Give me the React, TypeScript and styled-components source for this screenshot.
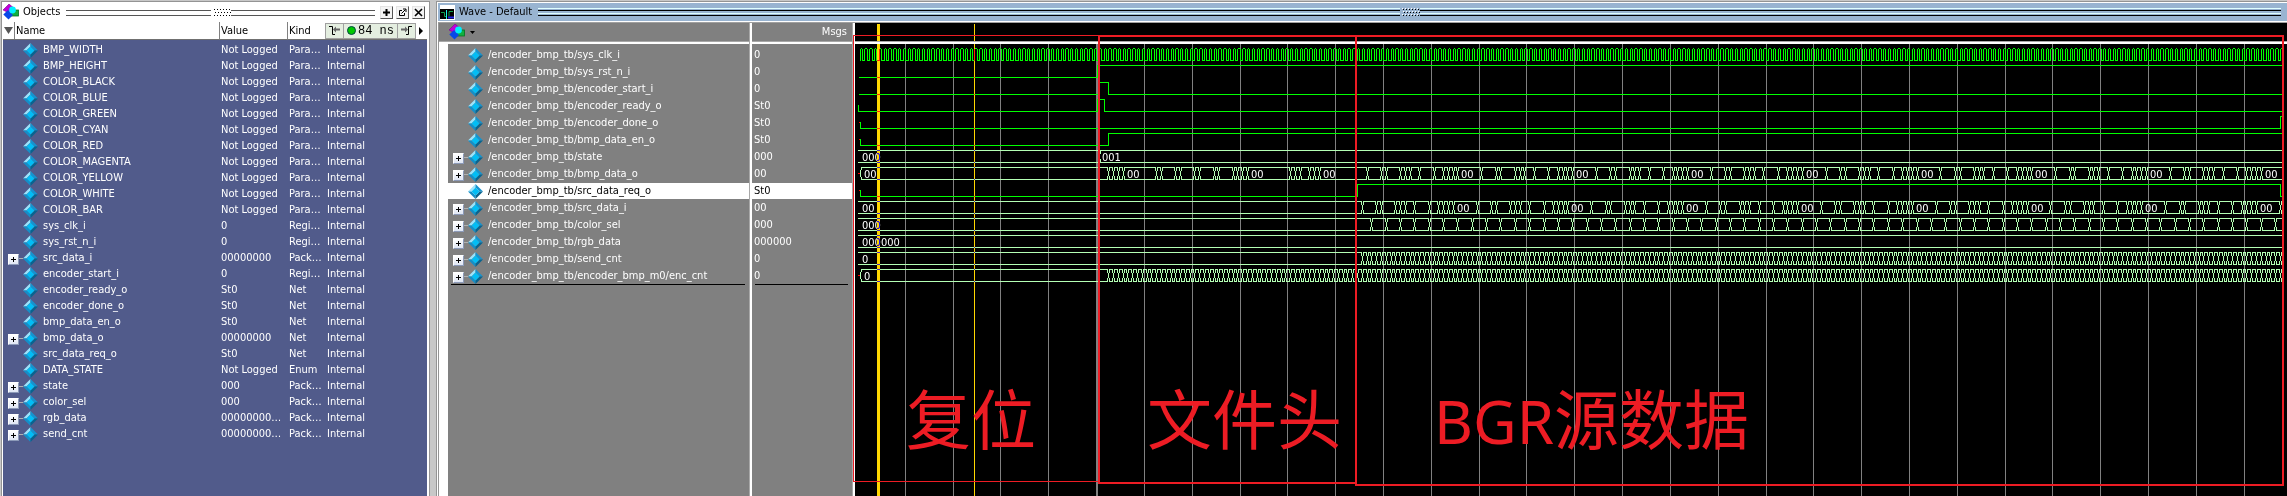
import React from "react";
import styled, { createGlobalStyle } from "styled-components";

const GlobalStyle = createGlobalStyle`
  * { box-sizing: border-box; }
  body {
    margin: 0;
    background: #c8c8c8;
    font-family: "DejaVu Sans Condensed", "Noto Sans", sans-serif;
    font-size: 11px;
    line-height: 16px;
    color: #000;
  }
  button { margin: 0; padding: 0; font: inherit; color: inherit; }
`;

/* ---------- data ---------- */

type ObjectRow = [name: string, value: string, kind: string, expandable?: boolean];

const objects: ObjectRow[] = [
  ["BMP_WIDTH", "Not Logged", "Para…"],
  ["BMP_HEIGHT", "Not Logged", "Para…"],
  ["COLOR_BLACK", "Not Logged", "Para…"],
  ["COLOR_BLUE", "Not Logged", "Para…"],
  ["COLOR_GREEN", "Not Logged", "Para…"],
  ["COLOR_CYAN", "Not Logged", "Para…"],
  ["COLOR_RED", "Not Logged", "Para…"],
  ["COLOR_MAGENTA", "Not Logged", "Para…"],
  ["COLOR_YELLOW", "Not Logged", "Para…"],
  ["COLOR_WHITE", "Not Logged", "Para…"],
  ["COLOR_BAR", "Not Logged", "Para…"],
  ["sys_clk_i", "0", "Regi…"],
  ["sys_rst_n_i", "0", "Regi…"],
  ["src_data_i", "00000000", "Pack…", true],
  ["encoder_start_i", "0", "Regi…"],
  ["encoder_ready_o", "St0", "Net"],
  ["encoder_done_o", "St0", "Net"],
  ["bmp_data_en_o", "St0", "Net"],
  ["bmp_data_o", "00000000", "Net", true],
  ["src_data_req_o", "St0", "Net"],
  ["DATA_STATE", "Not Logged", "Enum"],
  ["state", "000", "Pack…", true],
  ["color_sel", "000", "Pack…", true],
  ["rgb_data", "00000000…", "Pack…", true],
  ["send_cnt", "00000000…", "Pack…", true],
];

interface Signal {
  name: string;
  value: string;
  expandable?: boolean;
  selected?: boolean;
}

const signals: Signal[] = [
  { name: "/encoder_bmp_tb/sys_clk_i", value: "0" },
  { name: "/encoder_bmp_tb/sys_rst_n_i", value: "0" },
  { name: "/encoder_bmp_tb/encoder_start_i", value: "0" },
  { name: "/encoder_bmp_tb/encoder_ready_o", value: "St0" },
  { name: "/encoder_bmp_tb/encoder_done_o", value: "St0" },
  { name: "/encoder_bmp_tb/bmp_data_en_o", value: "St0" },
  { name: "/encoder_bmp_tb/state", value: "000", expandable: true },
  { name: "/encoder_bmp_tb/bmp_data_o", value: "00", expandable: true },
  { name: "/encoder_bmp_tb/src_data_req_o", value: "St0", selected: true },
  { name: "/encoder_bmp_tb/src_data_i", value: "00", expandable: true },
  { name: "/encoder_bmp_tb/color_sel", value: "000", expandable: true },
  { name: "/encoder_bmp_tb/rgb_data", value: "000000", expandable: true },
  { name: "/encoder_bmp_tb/send_cnt", value: "0", expandable: true },
  { name: "/encoder_bmp_tb/encoder_bmp_m0/enc_cnt", value: "0", expandable: true },
];

/* ---------- small drawings ---------- */

const Glyph = styled.svg`
  display: block;
  flex: none;
`;

const Diamond = () => (
  <Glyph width="15" height="15" viewBox="0 0 15 15" aria-hidden="true">
    <path d="M7.5 0 L0 7.5 L3.5 7.5 L7.5 3.5 Z" fill="#9be3fb" />
    <path d="M7.5 0 L15 7.5 L11.5 7.5 L7.5 3.5 Z" fill="#1593cf" />
    <path d="M0 7.5 L7.5 15 L7.5 11.5 L3.5 7.5 Z" fill="#148fc8" />
    <path d="M15 7.5 L7.5 15 L7.5 11.5 L11.5 7.5 Z" fill="#08648f" />
    <path d="M7.5 3.5 L11.5 7.5 L7.5 11.5 L3.5 7.5 Z" fill="#02bdf5" />
  </Glyph>
);

const ShapesIcon = () => (
  <Glyph width="16" height="16" viewBox="0 0 16 16" aria-hidden="true">
    <path d="M6 0 L12 5 L6 9 L0 6 Z" fill="#c000d8" stroke="#7a0090" strokeWidth="0.6" />
    <rect x="8" y="6" width="7.5" height="6" fill="#10b040" stroke="#067020" strokeWidth="0.8" />
    <path d="M5 6 L10 11 L5.5 15.6 L0.3 10.5 Z" fill="#0848e8" />
    <circle cx="9.5" cy="6" r="3.4" fill="#00f0ff" />
  </Glyph>
);

const WaveIcon = () => (
  <Glyph width="15" height="15" viewBox="0 0 15 15" aria-hidden="true">
    <rect width="15" height="15" fill="#fff" />
    <rect y="4" width="14" height="10" fill="#000" />
    <path d="M1 7.5 H4.5 V11.5 H6 M9 11.5 V6.5 H13" fill="none" stroke="#10a050" />
    <path d="M6.5 5 V14" stroke="#20f0f0" />
    <path d="M8 12.5 H14" stroke="#2020e0" strokeWidth="2" />
  </Glyph>
);

const GripDots = ({ light }: { light: string }) => {
  const dots = [];
  for (let r = 0; r < 3; r++)
    for (let c = 0; c < 6; c++) dots.push([c * 3 + (r % 2), r * 3]);
  return (
    <Glyph width="18" height="9" shapeRendering="crispEdges" aria-hidden="true">
      {dots.map(([x, y]) => (
        <g key={`${x}-${y}`}>
          <rect x={x} y={y} width="1" height="1" fill={light} />
          <rect x={x + 1} y={y + 1} width="1" height="1" fill="#000" />
        </g>
      ))}
    </Glyph>
  );
};

/* ---------- window frame ---------- */

const Workspace = styled.main`
  display: flex;
  gap: 6px;
  min-height: 100vh;
  padding: 1px 0 0 1px;
`;

const Panel = styled.section<{ $width?: number }>`
  display: flex;
  flex-direction: column;
  flex: ${(p) => (p.$width ? `0 0 ${p.$width}px` : "1 1 0")};
  min-width: 0;
  border: solid #949494;
  border-width: 1px ${(p) => (p.$width ? 1 : 0)}px 0 1px;
  background: #fff;
`;

const TitleBar = styled.header<{ $active?: boolean }>`
  display: flex;
  align-items: center;
  height: ${(p) => (p.$active ? 18 : 20)}px;
  padding: 0 4px 0 ${(p) => (p.$active ? 2 : 1)}px;
  margin: ${(p) => (p.$active ? "1px 0 1px 1px" : "0")};
  background: ${(p) => (p.$active ? "#99b4d1" : "#fff")};
`;

const Title = styled.h2`
  margin: 0 6px 0 4px;
  font-size: 11px;
  font-weight: 400;
  white-space: nowrap;
`;

const GripLines = styled.span<{ $light: string; $dark: string }>`
  flex: 1;
  height: 8px;
  margin: 0 2px 0 0;
  background: linear-gradient(
    ${(p) => p.$light} 0 1px, transparent 1px 2px, ${(p) => p.$dark} 2px 3px, transparent 3px 5px,
    ${(p) => p.$light} 5px 6px, transparent 6px 7px, ${(p) => p.$dark} 7px 8px
  );
`;

const WindowButton = styled.button`
  display: grid;
  place-items: center;
  width: 13px;
  height: 13px;
  margin-left: 3px;
  border: 1px solid;
  border-color: #e4e4e4 #555 #555 #e4e4e4;
  background: #f4f4f4;
`;

/* ---------- tree label shared by both panels ---------- */

const TreeLabel = styled.div`
  display: flex;
  align-items: center;
  height: 16px;
  padding-left: 5px;
  white-space: nowrap;
`;

const Branch = styled.span`
  display: flex;
  align-items: center;
  flex: none;
  width: 15px;
`;

const ExpandButton = styled.button`
  position: relative;
  width: 11px;
  height: 11px;
  margin-top: 2px;
  border: 1px solid #8c9ab8;
  border-color: #fff #8c9ab8 #8c9ab8 #fff;
  background: linear-gradient(#fff, #dfe6f4);

  &::before, &::after {
    content: "";
    position: absolute;
    background: #000;
  }
  &::before { left: 2px; top: 4px; width: 5px; height: 1px; }
  &::after { left: 4px; top: 2px; width: 1px; height: 5px; }
`;

const Connector = styled.i`
  flex: 1;
  height: 1px;
  background: #b0b0b0;
`;

const LabelText = styled.span`
  margin-left: 5px;
`;

const TreeItem = ({ name, expandable }: { name: string; expandable?: boolean }) => (
  <TreeLabel>
    <Branch>
      {expandable && (
        <>
          <ExpandButton type="button" aria-label={`Expand ${name}`} />
          <Connector />
        </>
      )}
    </Branch>
    <Diamond />
    <LabelText>{name}</LabelText>
  </TreeLabel>
);

/* ---------- objects panel ---------- */

const ObjectsBody = styled.div`
  flex: 1;
  margin: 0 2px 0 1px;
  background: #515b8b;
`;

const ObjectsTable = styled.table`
  width: 100%;
  table-layout: fixed;
  border-collapse: separate;
  border-spacing: 0;
  color: #fff;
`;

const Column = styled.col<{ $width?: number }>`
  width: ${(p) => (p.$width ? `${p.$width}px` : "auto")};
`;

const HeadCell = styled.th<{ $first?: boolean }>`
  height: 18px;
  padding: ${(p) => (p.$first ? "0" : "1px 0 0 1px")};
  border-left: ${(p) => (p.$first ? 0 : 1)}px solid #808080;
  border-bottom: 1px solid #707070;
  background: #fff;
  color: #000;
  font-weight: 400;
  text-align: left;
`;

const HeadFlex = styled.div`
  display: flex;
  align-items: center;
  height: 17px;
`;

const SortButton = styled.button`
  display: grid;
  place-items: center;
  width: 12px;
  height: 17px;
  margin-right: 1px;
  border: 0;
  border-right: 1px solid #808080;
  background: #fff;
`;

const TimeBox = styled.div`
  display: flex;
  flex: none;
  height: 16px;
  border: 1px solid #a0a0a0;
  background: #e4eee0;
`;

const TimePart = styled.button`
  display: flex;
  align-items: center;
  flex: none;
  gap: 2px;
  padding: 0 3px;
  border: 0;
  border-right: 1px solid #a0a0a0;
  background: none;
  line-height: 14px;
  white-space: nowrap;

  &:last-child { border-right: 0; }
`;

const TimeText = styled.span`
  font-family: "Liberation Mono", monospace;
  font-size: 12px;
`;

const Cell = styled.td`
  height: 16px;
  padding: 0 0 0 2px;
  white-space: nowrap;
  overflow: hidden;

  &:first-child { padding: 0; }
`;

const ObjectRows = styled.tbody`
  &::before { content: ""; display: block; height: 2px; }
`;

const ObjectsPanel = () => (
  <Panel $width={429}>
    <TitleBar>
      <ShapesIcon />
      <Title>Objects</Title>
      <GripLines $light="transparent" $dark="#555" />
      <GripDots light="#fff" />
      <GripLines $light="transparent" $dark="#555" />
      <WindowButton type="button" aria-label="Maximize">
        <Glyph width="9" height="9"><path d="M4.5 1 V8 M1 4.5 H8" stroke="#000" strokeWidth="2" /></Glyph>
      </WindowButton>
      <WindowButton type="button" aria-label="Undock">
        <Glyph width="9" height="9">
          <path d="M4 2.5 H1.5 V7.5 H6.5 V5" fill="none" stroke="#000" />
          <path d="M3.5 5.5 L7.5 1.5 M5 1 H8 V4" fill="none" stroke="#000" />
        </Glyph>
      </WindowButton>
      <WindowButton type="button" aria-label="Close">
        <Glyph width="9" height="9"><path d="M1 1 L8 8 M8 1 L1 8" stroke="#000" strokeWidth="1.6" /></Glyph>
      </WindowButton>
    </TitleBar>
    <ObjectsBody>
      <ObjectsTable>
        <colgroup>
          <Column $width={216} />
          <Column $width={68} />
          <Column $width={38} />
          <Column />
        </colgroup>
        <thead>
          <tr>
            <HeadCell $first>
              <HeadFlex>
                <SortButton type="button" aria-label="Column filter">
                  <Glyph width="9" height="9"><path d="M0 1 H9 L4.5 8 Z" fill="#555" /></Glyph>
                </SortButton>
                Name
              </HeadFlex>
            </HeadCell>
            <HeadCell>Value</HeadCell>
            <HeadCell>Kind</HeadCell>
            <HeadCell $first>
              <HeadFlex>
                <TimeBox>
                  <TimePart type="button" aria-label="Previous event">
                    <Glyph width="11" height="11">
                      <path d="M0 1.5 H3.5 V9.5 H6" fill="none" stroke="#000" />
                      <path d="M4 4.5 L7 1.5 V3.5 H11 V5.5 H7 V7.5 Z" fill="#666" />
                    </Glyph>
                  </TimePart>
                  <TimePart type="button">
                    <Glyph width="9" height="9"><circle cx="4.5" cy="4.5" r="4" fill="#00c800" stroke="#044" strokeWidth="1" /></Glyph>
                    <TimeText>84 ns</TimeText>
                  </TimePart>
                  <TimePart type="button" aria-label="Next event">
                    <Glyph width="11" height="11">
                      <path d="M5 9.5 H7.5 V1.5 H11" fill="none" stroke="#000" />
                      <path d="M7 4.5 L4 1.5 V3.5 H0 V5.5 H4 V7.5 Z" fill="#666" />
                    </Glyph>
                  </TimePart>
                </TimeBox>
                <TimePart type="button" aria-label="More">
                  <Glyph width="4" height="8"><path d="M0 0 L4 4 L0 8 Z" fill="#000" /></Glyph>
                </TimePart>
              </HeadFlex>
            </HeadCell>
          </tr>
        </thead>
        <ObjectRows>
          {objects.map(([name, value, kind, expandable]) => (
            <tr key={name}>
              <Cell><TreeItem name={name} expandable={expandable} /></Cell>
              <Cell>{value}</Cell>
              <Cell>{kind}</Cell>
              <Cell>Internal</Cell>
            </tr>
          ))}
        </ObjectRows>
      </ObjectsTable>
    </ObjectsBody>
  </Panel>
);

/* ---------- wave panel ---------- */

const WaveBody = styled.div`
  display: flex;
  flex: 1;
  border-top: 1px solid #a0a0a0;
  border-left: 1px solid #949494;
  margin-left: 1px;
`;

const Pane = styled.div<{ $width: number }>`
  display: flex;
  flex-direction: column;
  flex: 0 0 ${(p) => p.$width}px;
  border-right: 1px solid #a8a8a8;
  color: #fff;

  & + & { margin-left: 2px; }
`;

const PaneHead = styled.div<{ $end?: boolean }>`
  display: flex;
  align-items: center;
  justify-content: ${(p) => (p.$end ? "flex-end" : "flex-start")};
  height: 19px;
  padding: 0 5px 0 10px;
  border-bottom: 1px solid #a8a8a8;
  background: #808080;
`;

const MenuButton = styled.button`
  display: flex;
  align-items: center;
  gap: 5px;
  border: 0;
  background: none;
`;

const SignalList = styled.ul<{ $gutter?: number }>`
  flex: 1;
  margin: 2px 0 0 ${(p) => p.$gutter ?? 0}px;
  padding: 3px 0 0;
  list-style: none;
  background: #808080;
`;

const SignalItem = styled.li<{ $selected?: boolean; $inset?: boolean }>`
  height: 16px;
  margin-bottom: 1px;
  padding-left: ${(p) => (p.$inset ? 2 : 0)}px;
  background: ${(p) => (p.$selected ? "#fff" : "transparent")};
  color: ${(p) => (p.$selected ? "#000" : "#fff")};
`;

const EndRule = styled.li`
  height: 1px;
  margin: -1px 4px 0 3px;
  background: #000;
`;

const Plot = styled.svg`
  display: block;
  flex: 1 1 0;
  min-width: 0;
  background: #000;
`;

const WaveLabel = styled.text`
  fill: #fff;
  font-size: 11px;
`;

const Note = styled.text`
  fill: #ed1c24;
  font-family: "Noto Sans CJK SC", sans-serif;
  font-size: 65px;
`;

const LatinNote = styled.tspan`
  font-family: "Noto Sans", sans-serif;
  font-size: 60px;
`;

/* Clock k rises at FIRST_EDGE + k * CLOCK, measured from the left of the plot. */
const CLOCK = 4.782;
const FIRST_EDGE = 7.2;
const END = 1430;
const HEADER_START = 52;
const PIXELS_START = HEADER_START + 54;
const LAST_EDGE = 297;
const edge = (k: number) => Math.floor(FIRST_EDGE + k * CLOCK);
const top = (row: number) => 25 + row * 17;
const bottom = (row: number) => top(row) + 12;

const clockPath = () => {
  let d = "";
  for (let k = 0; k <= LAST_EDGE; k++) {
    const up = edge(k);
    const down = Math.floor(FIRST_EDGE + (k + 0.5) * CLOCK);
    const next = Math.min(edge(k + 1), END);
    d += `M${up} ${bottom(0)}V${top(0) + 1}M${up + 1} ${top(0)}H${down - 1}`;
    d += `M${down} ${top(0) + 1}V${bottom(0)}H${next}`;
  }
  return d;
};

/* A one-bit trace: starts low and toggles at each x in the list. */
const bitPath = (row: number, toggles: number[], start = 7, rising = false) => {
  const mid = top(row) + 6;
  let high = false;
  let d = rising ? `M${start} ${mid}V${bottom(row)}` : `M${start} ${bottom(row)}`;
  for (const x of toggles) {
    d += `H${x}`;
    high = !high;
    d += `V${high ? top(row) : bottom(row)}`;
  }
  return d + `H${END}`;
};

/* A bus trace: two rails that pinch together at every transition. */
const busPath = (row: number, changes: number[], open = false) => {
  const t = top(row);
  const b = bottom(row);
  let from = open ? 8 : 5;
  let d = open ? `M8 ${t}V${t + 2}M7 ${t + 3}V${b - 3}M8 ${b - 2}V${b}` : "";
  for (const x of changes) {
    d += `M${from} ${t}H${x - 1}V${t + 3}M${x} ${t + 4}V${b - 4}M${from} ${b}H${x - 1}V${b - 3}`;
    d += `M${x + 1} ${t}V${t + 3}M${x + 1} ${b}V${b - 3}`;
    from = x + 1;
  }
  return d + `M${from} ${t}H${END}M${from} ${b}H${END}`;
};

const range = (from: number, to: number, step = 1) => {
  const out: number[] = [];
  for (let i = from; i <= to; i += step) out.push(i);
  return out;
};

const headerChanges = [0, 1, 2, 3, 10, 11, 14, 15, 18, 19, 22, 23, 26, 27, 28, 29, 38, 39, 40, 42, 43, 44];
const barChanges = [0, 3, 4, 7, 8, 9, 11, 14, 16, 17, 18, 19];
const bars = range(0, 7);

const barEdges = (start: number) =>
  bars.flatMap((n) => barChanges.map((c) => start + n * 24 + c)).filter((k) => k < LAST_EDGE);

const bmpEdges = [...headerChanges.map((c) => HEADER_START + c), ...barEdges(PIXELS_START)];
const srcEdges = [...barEdges(PIXELS_START - 1), LAST_EDGE];

const labels: [row: number, x: number, text: string][] = [
  [6, 9, "000"],
  [6, edge(50) + 3, "001"],
  [7, 11, "00"],
  ...[3, 29, 44].map((c): [number, number, string] => [7, edge(HEADER_START + c) + 4, "00"]),
  ...bars.map((n): [number, number, string] => [7, edge(PIXELS_START + n * 24 + 19) + 4, "00"]),
  [9, 9, "00"],
  ...bars.map((n): [number, number, string] => [9, edge(PIXELS_START - 1 + n * 24 + 19) + 4, "00"]),
  [10, 9, "000"],
  [11, 9, "000000"],
  [12, 9, "0"],
  [13, 11, "0"],
];

const bits = [
  bitPath(1, [244], 6),
  bitPath(2, [246, edge(52)], 6),
  bitPath(3, [244, edge(51)], 5, true),
  bitPath(4, [edge(LAST_EDGE)], 7, true),
  bitPath(5, [edge(52)], 7, true),
  bitPath(8, [edge(104), edge(LAST_EDGE)], 7, true),
];

const buses = [
  busPath(6, [edge(50)]),
  busPath(7, bmpEdges.map(edge), true),
  busPath(9, srcEdges.map(edge)),
  busPath(10, range(PIXELS_START + 1, LAST_EDGE - 1, 3).map(edge)),
  busPath(11, []),
  busPath(12, range(PIXELS_START - 1, LAST_EDGE).map(edge)),
  busPath(13, range(HEADER_START, LAST_EDGE).map(edge), true),
];

const WavePlot = () => (
  <Plot shapeRendering="crispEdges" role="img" aria-label="Waveforms">
    {range(0, 28).map((n) => (
      <rect key={n} x={Math.floor(52.3 + n * CLOCK * 10)} y="21" width="1" height="100%" fill="#808080" />
    ))}
    <rect x={244} y="21" width="1" height="100%" fill="#808080" />
    <g transform="translate(0.5 0.5)" fill="none" strokeLinecap="square">
      <path d={clockPath()} stroke="#00ff00" />
      <path d={bits.join("")} stroke="#00ff00" />
      <path d={buses.join("")} stroke="#b4ffb4" />
      {[4, 5, 8].map((r) => (
        <path key={r} d={`M6 ${top(r) + 6}h0`} stroke="#ff0000" />
      ))}
      {[7, 13].map((r) => (
        <path key={r} d={`M5 ${top(r) + 6}h1`} stroke="#ff0000" />
      ))}
    </g>
    {labels.map(([row, x, text]) => (
      <WaveLabel key={`${row}-${x}`} x={x} y={top(row) + 11}>{text}</WaveLabel>
    ))}
    <g style={{ mixBlendMode: "difference" }} fill="#ffd700">
      <rect x="24" y="1" width="3" height="100%" />
      <rect x="121" y="1" width="1" height="100%" />
    </g>
    <rect x="0" y="18" width="100%" height="1" fill="#a8a8a8" />
    <rect x="0" y="19" width="100%" height="2" fill="#fff" />
    <rect x="0" y="0" width="2" height="100%" fill="#fff" />
    <g fill="none" stroke="#ed1c24">
      <path d="M245 12.5 H0.5 V458.5 H245" />
      <path d="M246 12 V460 H503" strokeWidth="2" />
      <path d="M245 13 H1430 V462 H503 V13" strokeWidth="2" />
    </g>
    <Note x="53" y="421">复位</Note>
    <Note x="294" y="421">文件头</Note>
    <Note x="581" y="421"><LatinNote>BGR</LatinNote>源数据</Note>
  </Plot>
);

const WavePanel = () => (
  <Panel>
    <TitleBar $active>
      <WaveIcon />
      <Title>Wave - Default</Title>
      <GripLines $light="#e0ffff" $dark="#000" />
      <GripDots light="#fff" />
      <GripLines $light="#e0ffff" $dark="#000" />
    </TitleBar>
    <WaveBody>
      <Pane $width={311}>
        <PaneHead>
          <MenuButton type="button" aria-label="Wave options">
            <ShapesIcon />
            <Glyph width="5" height="3"><path d="M0 0 H5 L2.5 3 Z" fill="#000" /></Glyph>
          </MenuButton>
        </PaneHead>
        <SignalList $gutter={9}>
          {signals.map((s) => (
            <SignalItem key={s.name} $selected={s.selected}>
              <TreeItem name={s.name} expandable={s.expandable} />
            </SignalItem>
          ))}
          <EndRule />
        </SignalList>
      </Pane>
      <Pane $width={101}>
        <PaneHead $end>Msgs</PaneHead>
        <SignalList>
          {signals.map((s) => (
            <SignalItem key={s.name} $selected={s.selected} $inset>{s.value}</SignalItem>
          ))}
          <EndRule />
        </SignalList>
      </Pane>
      <WavePlot />
    </WaveBody>
  </Panel>
);

export default function App() {
  return (
    <>
      <GlobalStyle />
      <Workspace>
        <ObjectsPanel />
        <WavePanel />
      </Workspace>
    </>
  );
}
